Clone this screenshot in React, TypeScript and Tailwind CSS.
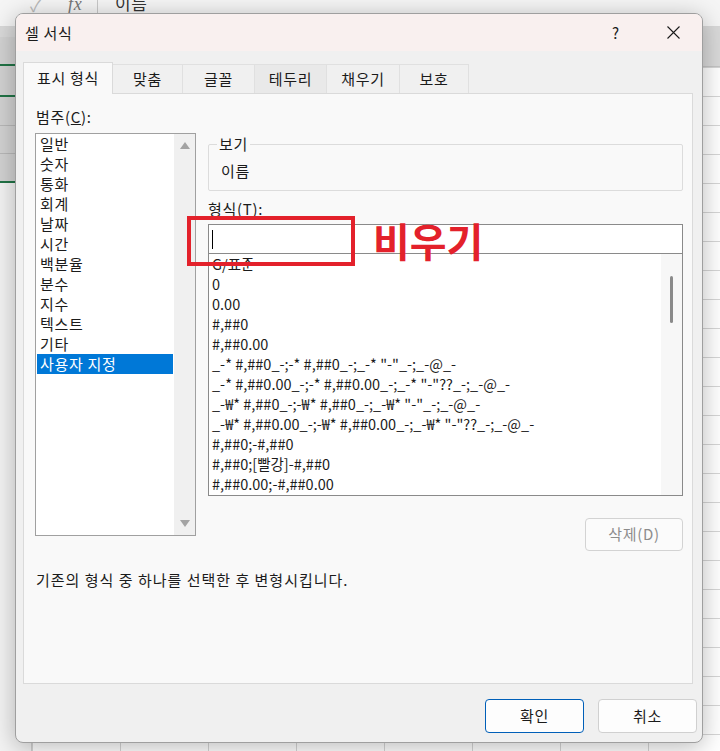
import React from "react";

const categories = [
  "일반",
  "숫자",
  "통화",
  "회계",
  "날짜",
  "시간",
  "백분율",
  "분수",
  "지수",
  "텍스트",
  "기타",
  "사용자 지정",
];

const formats = [
  "G/표준",
  "0",
  "0.00",
  "#,##0",
  "#,##0.00",
  '_-* #,##0_-;-* #,##0_-;_-* "-"_-;_-@_-',
  '_-* #,##0.00_-;-* #,##0.00_-;_-* "-"??_-;_-@_-',
  '_-₩* #,##0_-;-₩* #,##0_-;_-₩* "-"_-;_-@_-',
  '_-₩* #,##0.00_-;-₩* #,##0.00_-;_-₩* "-"??_-;_-@_-',
  "#,##0;-#,##0",
  "#,##0;[빨강]-#,##0",
  "#,##0.00;-#,##0.00",
];

const tabs = [
  { label: "맞춤", w: "w-[70px]", bg: "bg-[#f0f0f0]" },
  { label: "글꼴", w: "w-[72px]", bg: "bg-[#f0f0f0]" },
  { label: "테두리", w: "w-[72px]", bg: "bg-[#e9e9e9]" },
  { label: "채우기", w: "w-[73px]", bg: "bg-[#f0f0f0]" },
  { label: "보호", w: "w-[69px]", bg: "bg-[#f0f0f0]" },
];

export default function App() {
  return (
    <div className="relative w-[720px] h-[751px] overflow-hidden bg-white font-['Noto_Sans_CJK_KR','Noto_Sans',sans-serif] text-[#1b1b1b] tracking-[0.7px]">
      {/* Excel background */}
      <div className="absolute inset-0 bg-[linear-gradient(to_right,#d6d6d6_1px,transparent_1px),linear-gradient(to_bottom,#d6d6d6_1px,transparent_1px)] bg-[size:88px_29px] bg-[position:32px_9px]" />
      <div className="absolute left-0 top-0 w-[720px] h-[27px] bg-[#f5f5f5] border-b border-[#d8d8d8]">
        <span className="absolute left-[30px] top-[-5px] text-[16px] leading-[20px] text-[#b8b8b8]">✓</span>
        <span className="absolute left-[68px] top-[-6px] text-[18px] leading-[20px] italic font-['Liberation_Serif',serif] text-[#777]">fx</span>
        <div className="absolute left-[97px] top-0 w-px h-[14px] bg-[#c8c8c8]" />
        <span className="absolute left-[115px] top-[-7px] text-[17px] leading-[20px] text-[#333]">이름</span>
      </div>
      <div className="absolute left-0 top-[27px] w-[720px] h-[40px] bg-[#d9d9d9] border-b border-[#c4c4c4]" />
      <div className="absolute left-0 top-[37px] w-[32px] h-[146px] bg-[#d2d2d2] border-b-2 border-[#217346]">
        <div className="absolute left-0 top-[27px] w-full h-[2px] bg-[#217346]" />
        <div className="absolute left-0 top-[58px] w-full h-[2px] bg-[#217346]" />
        <div className="absolute left-0 top-[88px] w-full h-px bg-[#b8b8b8]" />
        <div className="absolute left-0 top-[116px] w-full h-px bg-[#b8b8b8]" />
      </div>
      <div className="absolute left-0 top-[183px] w-[32px] h-[568px] bg-[#f3f3f3] border-r border-[#d0d0d0]" />

      {/* Dialog */}
      <div className="absolute left-[15px] top-[13px] w-[688px] h-[730px] flex flex-col rounded-[8px] border border-[#9f9f9f] bg-[#f0f0f0] overflow-hidden shadow-[0_4px_24px_rgba(0,0,0,0.28)]">
        {/* Title bar */}
        <div className="h-[37px] shrink-0 flex items-center pl-[9px] bg-[#f9f0ef]">
          <span className="text-[15px] leading-[20px]">셀 서식</span>
          <div className="ml-auto flex items-center">
            <span className="w-[20px] text-center text-[15px] leading-[20px] mr-[24px]">?</span>
            <div className="w-[46px] h-[30px] flex items-center justify-center mr-[6px]">
              <svg width="13" height="13" viewBox="0 0 13 13">
                <path d="M0.5 0.5 L12.5 12.5 M12.5 0.5 L0.5 12.5" stroke="#1b1b1b" strokeWidth="1.1" fill="none" />
              </svg>
            </div>
          </div>
        </div>

        {/* Tabs */}
        <div className="mt-[11px] pl-[7px] flex items-end h-[31px] shrink-0">
          <div className="relative z-10 w-[90px] h-[32px] -mb-px flex items-center justify-center bg-[#f9f9f9] border-l border-t border-r border-[#dadada] text-[15px]">
            표시 형식
          </div>
          {tabs.map((t) => (
            <div
              key={t.label}
              className={`${t.w} ${t.bg} h-[29px] flex items-center justify-center border-t border-r border-[#e0e0e0] text-[15px]`}
            >
              {t.label}
            </div>
          ))}
        </div>

        {/* Panel */}
        <div className="ml-[7px] w-[670px] h-[591px] shrink-0 border border-[#dadada] bg-[#f9f9f9] flex flex-col">
          <div className="flex pt-[13px]">
            {/* Category column */}
            <div className="ml-[11px] w-[161px] flex flex-col">
              <div className="pl-[1px] text-[15px] leading-[20px]">
                범주(<span className="underline">C</span>):
              </div>
              <div className="mt-[6px] h-[403px] border border-[#a0a0a0] bg-white flex">
                <div className="flex-1 flex flex-col">
                  {categories.map((c, i) => (
                    <div
                      key={c}
                      className={`mx-[1px] h-[20px] pl-[3px] text-[15px] leading-[20px] ${
                        i === categories.length - 1 ? "bg-[#0078d7] text-white" : ""
                      }`}
                    >
                      {c}
                    </div>
                  ))}
                </div>
                <div className="w-[21px] bg-[#f0f0f0] flex flex-col items-center justify-between py-[8px]">
                  <svg width="10" height="7" viewBox="0 0 10 7">
                    <path d="M5 0 L10 7 L0 7 Z" fill="#a3a3a3" />
                  </svg>
                  <svg width="10" height="7" viewBox="0 0 10 7">
                    <path d="M0 0 L10 0 L5 7 Z" fill="#a3a3a3" />
                  </svg>
                </div>
              </div>
            </div>

            {/* Right column */}
            <div className="ml-[12px] w-[475px] flex flex-col">
              <div className="relative mt-[37px] h-[47px] border border-[#dcdcdc] rounded-[2px]">
                <span className="absolute -top-[11px] left-[8px] px-[2px] bg-[#f9f9f9] text-[15px] leading-[20px]">
                  보기
                </span>
                <div className="pl-[12px] pt-[16px] text-[15px] leading-[20px]">이름</div>
              </div>
              <div className="mt-[8px] text-[15px] leading-[20px]">
                형식(<span className="underline">T</span>):
              </div>
              <div className="mt-[5px] h-[30px] border border-[#8a8a8a] bg-white flex items-center">
                <div className="ml-[3px] w-px h-[19px] bg-black" />
              </div>
              <div className="-mt-px h-[243px] border border-[#8a8a8a] bg-white flex">
                <div className="flex-1 flex flex-col pl-[3px] tracking-normal">
                  {formats.map((f) => (
                    <div key={f} className="h-[20px] text-[14.5px] leading-[20px] whitespace-pre">
                      {f}
                    </div>
                  ))}
                </div>
                <div className="w-[21px] bg-[#f7f7f7] flex justify-center">
                  <div className="mt-[22px] w-[3px] h-[47px] rounded-full bg-[#8a8a8a]" />
                </div>
              </div>
              <div className="mt-[22px] self-end w-[98px] h-[33px] rounded-[4px] border border-[#d3d3d3] bg-[#fbfbfb] flex items-center justify-center text-[15px] text-[#8c8c8c]">
                삭제(D)
              </div>
            </div>
          </div>
          <div className="ml-[12px] mt-[19px] text-[15px] leading-[20px] tracking-[1px]">
            기존의 형식 중 하나를 선택한 후 변형시킵니다.
          </div>
        </div>

        {/* Bottom buttons */}
        <div className="mt-[15px] flex justify-end gap-[14px] pr-[5px]">
          <div className="w-[99px] h-[34px] rounded-[4px] border-[1.5px] border-[#005fb8] bg-[#fdfdfd] flex items-center justify-center text-[15px]">
            확인
          </div>
          <div className="w-[99px] h-[34px] rounded-[4px] border border-[#d0d0d0] bg-[#fdfdfd] flex items-center justify-center text-[15px]">
            취소
          </div>
        </div>
      </div>

      {/* Annotation */}
      <div className="absolute left-[187px] top-[216px] w-[168px] h-[50px] border-[4px] border-[#e3212b]" />
      <div className="absolute left-[373px] top-[212px] text-[40px] leading-[56px] font-bold tracking-normal text-[#e3212b]">
        비우기
      </div>
    </div>
  );
}
